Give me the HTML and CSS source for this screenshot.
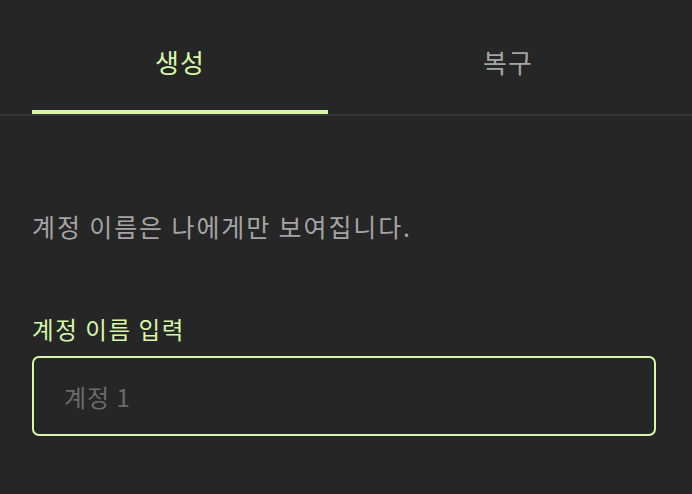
FILE: index.html
```html
<!DOCTYPE html>
<html>

<head>
    <meta charset="utf-8">
    <title>계정 생성</title>

    <link rel="stylesheet" href="styles.css">
</head>

<body>

    <nav class="tabs">
        <div class="tab tab-active">생성</div>
        <div class="tab">복구</div>
    </nav>

    <main class="content">
        <p class="hint">계정 이름은 나에게만 보여집니다.</p>

        <label class="field-label" for="account-name">계정 이름 입력</label>
        <input class="field-input" id="account-name" type="text" placeholder="계정 1">
    </main>

</body>

</html>
```

FILE: styles.css
```css
/* Base */

body {
    margin: 0;
    background: #262626;
    font-family: "Noto Sans CJK KR", "Noto Sans", sans-serif;
}

/* Tabs */

.tabs {
    display: flex;
    padding-left: 32px;
    border-bottom: 2px solid #363636;
}

.tab {
    display: flex;
    justify-content: center;
    align-items: center;
    height: 114px;
    box-sizing: border-box;
    padding-top: 8px;
    font-size: 26px;
    letter-spacing: 1px;
    color: #a4a4a4;
}

.tab:first-child {
    width: 296px;
}

.tab:last-child {
    flex: 1;
    padding-right: 4px;
}

.tab-active {
    color: #d6f7a8;
    box-shadow: inset 0 -4px 0 #d6f7a8;
}

/* Content */

.content {
    display: flex;
    flex-direction: column;
    padding: 0 36px 0 32px;
}

.hint {
    margin: 92px 0 0;
    font-size: 25px;
    line-height: 36px;
    letter-spacing: 1.9px;
    color: #a4a4a4;
}

.field-label {
    margin-top: 68px;
    font-size: 23.5px;
    line-height: 34px;
    letter-spacing: 1.6px;
    color: #d6f7a8;
}

.field-input {
    margin-top: 10px;
    height: 80px;
    box-sizing: border-box;
    padding: 0 30px;
    border: 2px solid #d6f7a8;
    border-radius: 7px;
    background: transparent;
    font-family: inherit;
    font-size: 24px;
    letter-spacing: 1px;
    color: #e0e0e0;
    outline: none;
}

.field-input::placeholder {
    color: #6b6b6b;
}
```
